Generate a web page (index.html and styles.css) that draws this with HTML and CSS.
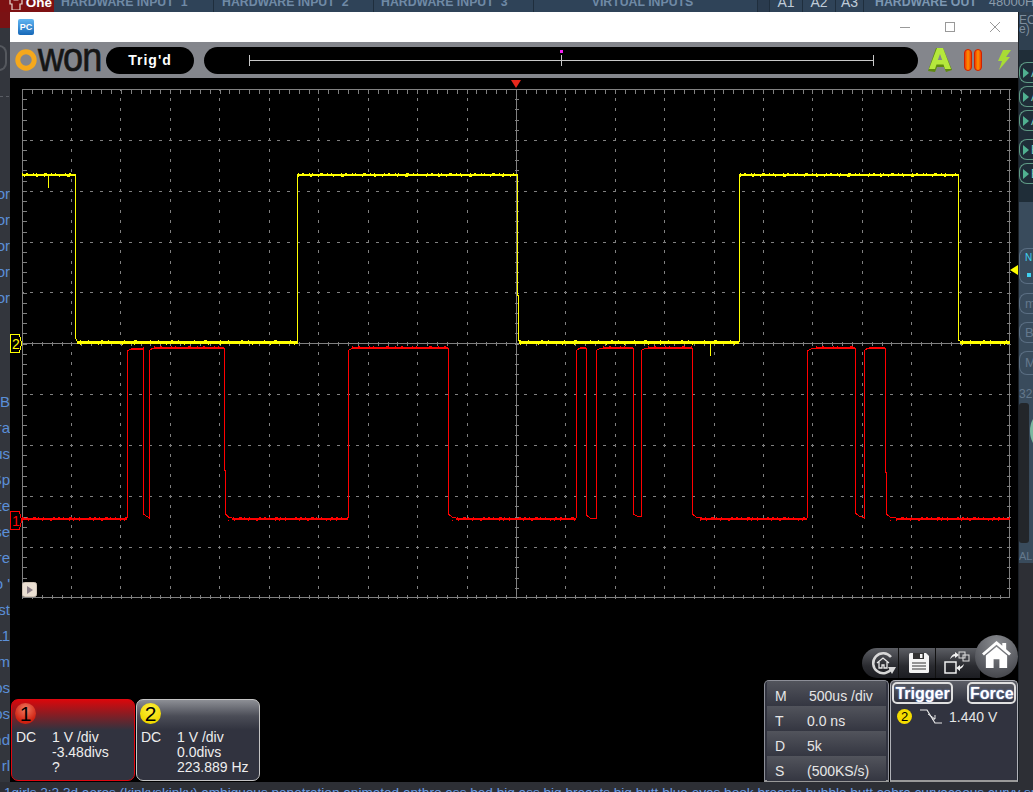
FILE: index.html
```html
<!DOCTYPE html>
<html lang="en">
<head>
<meta charset="utf-8">
<title>OWON oscilloscope</title>
<link rel="stylesheet" href="styles.css">
</head>
<body>
<div class="desktop">
  <header class="mixer-top">
    <div class="brand"><svg class="brand-icon" viewBox="0 0 14 12"><path d="M1 1h3l1 1h4l1-1h3v5h-2v6H3V6H1z" fill="none" stroke="#e8d8d0" stroke-width="1.2"/></svg><b>One</b></div>
    <div class="mix-cell wide"><span>HARDWARE INPUT</span><span class="num">1</span></div>
    <div class="mix-cell wide second"><span>HARDWARE INPUT</span><span class="num">2</span></div>
    <div class="mix-cell wide"><span>HARDWARE INPUT</span><span class="num">3</span></div>
    <div class="mix-cell virtual"><span>VIRTUAL INPUTS</span></div>
    <div class="mix-cell gap"></div>
    <div class="mix-cell bus">A1</div>
    <div class="mix-cell bus">A2</div>
    <div class="mix-cell bus last">A3</div>
    <div class="mix-out"><span>HARDWARE OUT</span><span class="rate">48000Hz</span></div>
  </header>

  <aside class="page-left">
    <div class="left-red"></div>
    <div class="left-ghost"></div>
    <div class="left-rule"></div>
    <div class="left-list">
      <span>or</span><span>or</span><span>or</span><span>or</span><span>or</span>
      <span></span><span></span><span></span>
      <span class="b">B</span><span>ra</span><span>us</span><span>Sp</span><span>te</span><span>se</span><span>ore</span><span>o '</span><span>ust</span><span>11</span><span>m</span><span>ps</span><span>ps</span><span>nd</span><span>rl</span>
    </div>
  </aside>

  <main class="scope">
    <div class="titlebar">
      <div class="pc-icon">PC</div>
      <div class="win-controls">
        <svg viewBox="0 0 10 10"><path d="M0 5.5h10" stroke="#999" fill="none"/></svg>
        <svg viewBox="0 0 10 10"><rect x=".5" y=".5" width="9" height="9" stroke="#999" fill="none"/></svg>
        <svg viewBox="0 0 10 10"><path d="M0 0l10 10M10 0L0 10" stroke="#999" fill="none"/></svg>
      </div>
    </div>

    <div class="toolbar">
      <div class="logo"><svg class="logo-ring" viewBox="0 0 22 22"><circle cx="11" cy="11" r="8.2" fill="none" stroke="#f5a81c" stroke-width="5"/></svg><span class="logo-text">won</span></div>
      <div class="pill status">Trig'd</div>
      <div class="pill timeline">
        <svg viewBox="204 47 714 27"><path d="M249.5 55v11M873.5 55v11M561.5 55v11M249 60.5h625" stroke="#c8c8c8" fill="none"/><rect x="560" y="50" width="3" height="3" fill="#f020f0"/></svg>
      </div>
      <svg class="auto-icon" viewBox="0 0 26 26">
        <path d="M9 1h7l9 22-6 2-2-5H10l-2 5-7-1z" fill="#5f8a10"/>
        <path d="M10 1h6l8 21h-6l-1.500-4.500H9.500L8 22H2z" fill="#b5e83c"/>
        <path d="M13 7l-2.200 6h4.400z" fill="#84868c"/>
      </svg>
      <svg class="pause-icon" viewBox="0 0 18 22">
        <defs><linearGradient id="pz" x1="0" x2="1" y1="0" y2="0"><stop offset="0" stop-color="#f03000"/><stop offset=".5" stop-color="#ff9000"/><stop offset="1" stop-color="#f03000"/></linearGradient></defs>
        <rect x=".5" y=".5" width="7" height="21" rx="3.500" fill="url(#pz)" stroke="#d02000"/>
        <rect x="10.500" y=".5" width="7" height="21" rx="3.500" fill="url(#pz)" stroke="#d02000"/>
      </svg>
      <svg class="bolt-icon" viewBox="0 0 14 20"><path d="M6 0h8L9 7h4L2 20l3-9H1z" fill="#a8dc34"/></svg>
    </div>

    <div class="screen">
      <svg class="graticule" viewBox="10 78 1008 526">
        <rect x="22.500" y="89.500" width="987" height="508" class="g-frame"/>
        <path class="g-v" d="M71.500 89V598M120.500 89V598M170.500 89V598M219.500 89V598M269.500 89V598M318.500 89V598M368.500 89V598M417.500 89V598M467.500 89V598M565.500 89V598M615.500 89V598M664.500 89V598M714.500 89V598M763.500 89V598M812.500 89V598M862.500 89V598M911.500 89V598M960.500 89V598"/>
        <path class="g-h" d="M22 140.500H1010M22 191.500H1010M22 242.500H1010M22 292.500H1010M22 394.500H1010M22 445.500H1010M22 496.500H1010M22 547.500H1010"/>
        <path class="g-tx" d="M22 91.500H1010M22 596.500H1010M22 343.500H1010"/>
        <path class="g-ty" d="M24.500 89V598M1008.500 89V598M516.500 89V598"/>
        <path class="g-axis" d="M22 343.500H1010M516.500 89V598"/>

        <path class="tr-y" d="M75.500 175V338L77 341H79M297.500 342V175M517.500 175V295H518.500V340L521 342M739.500 342V175M958.500 175V340L961 342M48.500 175V188M710.500 343V356"/>
        <path class="tr-y-high" d="M22 175H76M297 175H518M739 175H959"/>
        <path class="tr-y-low" d="M77 342.500H297.500M519 342.500H739M960 342.500H1010"/>
        <path class="n-y1" d="M22 173.500H76M298 173.500H517M740 173.500H958"/>
        <path class="n-y2" d="M24 176.500H76M298 176.500H517M740 176.500H958"/>
        <path class="n-y3" d="M80 340.500H297M520 340.500H738M962 340.500H1010"/>
        <path class="n-y3b" d="M80 344.500H297M520 344.500H738M962 344.500H1010"/>

        <path class="tr-r" d="M127.500 518V350.500L131 349H136L143.500 348V514L146 516L149.500 518V350.500L152 348.500H224.500V470H225.500V514L228 516.500L232 518M348.500 518V350.500L352 348.500H448.500V514L452 517L456 518M576.500 518V350.500L580 348H586.500V515L590 518H596.500V350.500L600 348.500H633.500V514L637 516H641.500V350.500L645 348.500H692.500V514L696 517L700 518M807.500 518V350.500L811 349L815 348H855.500V513L859 516L864.500 518V350.500L868 348H885.500V472H886.500V514L890 517L896 518"/>
        <path class="tr-r-lo" d="M22 519H127M232 519H348M456 519H576M700 519H807M896 519H1010"/>
        <path class="tr-r-hi" d="M131 349H143M154 348H224M352 348H448M580 348H586M603 348H633M648 348H692M816 348H855M869 348H885"/>
        <path class="n-r1" d="M22 517.500H127M228 517.500H348M452 517.500H576M700 517.500H807M890 517.500H1010"/>
        <path class="n-r2" d="M22 520.500H127M228 520.500H348M452 520.500H576M700 520.500H807M890 520.500H1010"/>
        <path class="n-r3" d="M154 346.500H224M352 346.500H448M603 346.500H633M648 346.500H692M816 346.500H855"/>

        <polygon class="trig-top" points="511,80 521,80 516,88"/>
        <polygon class="trig-right" points="1018,265 1018,275 1010,270"/>
        <path class="mk-y" d="M10.500 334.500H19.500L21.500 343.500L19.500 352.500H10.500z"/>
        <text class="mk-text mk-ty" x="12" y="348.500">2</text>
        <path class="mk-r" d="M10.500 511.500H19.500L21.500 520.500L19.500 529.500H10.500z"/>
        <text class="mk-text mk-tr" x="12" y="525.500">1</text>
        <rect class="play-box" x="22.500" y="582.500" width="14" height="14" rx="2"/>
        <polygon class="play-tri" points="27,586 27,594 33,590"/>
      </svg>

      <div class="lower">
        <div class="channels">
          <section class="ch ch1">
            <div class="ch-badge b-red">1</div>
            <div class="ch-grid"><span>DC</span><span>1 V /div</span><span></span><span>-3.48divs</span><span></span><span>?</span></div>
          </section>
          <section class="ch ch2">
            <div class="ch-badge b-yellow">2</div>
            <div class="ch-grid"><span>DC</span><span>1 V /div</span><span></span><span>0.0divs</span><span></span><span>223.889 Hz</span></div>
          </section>
        </div>

        <div class="control">
          <div class="tools">
            <div class="tool-pill">
              <div class="tool"><svg viewBox="0 0 26 26"><path d="M21 7A10 10 0 1 0 22 18" fill="none" stroke="#d8d8d8" stroke-width="2.500"/><path d="M18 17h8l-4 7z" fill="#d8d8d8"/><path d="M7 13l6-5 6 5M9 12v6h3v-3h2v3h3v-6" fill="none" stroke="#e8e8e8" stroke-width="1.300"/></svg></div>
              <div class="tool"><svg viewBox="0 0 20 20"><path d="M0 1.500Q0 0 1.500 0H17l3 3v15.500Q20 20 18.500 20H1.500Q0 20 0 18.500z" fill="#f4f4f4"/><path d="M4 0h11v6H4z" fill="#333"/><rect x="11" y="1" width="2.500" height="4" fill="#f4f4f4"/><path d="M3 10h14M3 13h14M3 16h14" stroke="#333" stroke-width="1.200"/></svg></div>
              <div class="tool"><svg viewBox="0 0 26 24"><rect x="1" y="11" width="11" height="11" fill="none" stroke="#f0f0f0" stroke-width="1.500"/><rect x="15" y="1" width="6" height="6" fill="none" stroke="#e0e0e0"/><rect x="19" y="4" width="6" height="6" fill="none" stroke="#e0e0e0"/><path d="M6 8Q8 3 11 3V1l4 3-4 3V5Q9 5 6 8zM20 13Q19 17 16 18v2l-4-3 4-3v2Q18 15 20 13z" fill="#f0f0f0"/></svg></div>
            </div>
            <div class="home"><svg viewBox="0 0 32 30"><path d="M16 1L1 14l2 2L16 5l13 11 2-2-5-4.500V3h-4v3z" fill="#fff"/><path d="M5 16L16 7l11 9v13h-8v-9h-6v9H5z" fill="#fff"/></svg></div>
          </div>
          <div class="panels">
            <div class="time-panel">
              <div class="trow"><span>M</span><span class="v1">500us /div</span></div>
              <div class="trow"><span>T</span><span>0.0 ns</span></div>
              <div class="trow"><span>D</span><span>5k</span></div>
              <div class="trow"><span>S</span><span>(500KS/s)</span></div>
            </div>
            <div class="trig-panel">
              <div class="trig-btns"><button class="tbtn">Trigger</button><button class="tbtn">Force</button></div>
              <div class="trig-info">
                <span class="mini-badge">2</span>
                <svg class="edge" viewBox="0 0 22 16"><path d="M0 1H7L15 14H22" fill="none" stroke="#e8e8e8" stroke-width="1.200"/><path d="M8 5L15 10M12 10H15V6" fill="none" stroke="#e8e8e8"/></svg>
                <span>1.440 V</span>
              </div>
            </div>
          </div>
        </div>
      </div>
    </div>
  </main>

  <aside class="page-right">
    <div class="r-head"><span>EC X</span><span>e)</span></div>
    <div class="r-dark">
      <div class="r-btn"><i></i><span>A</span></div>
      <div class="r-btn"><i></i><span>A</span></div>
      <div class="r-btn"><i></i><span>A</span></div>
      <div class="r-btn sep"><i></i><span>B</span></div>
      <div class="r-btn"><i></i><span>B</span></div>
    </div>
    <div class="r-mid">
      <div class="r-box cyan"><span>N</span><span class="m">m</span><span class="dots"></span></div>
      <div class="r-box plain">m</div>
      <div class="r-box plain">B</div>
      <div class="r-box plain tall">M</div>
      <div class="r-num">32</div>
      <div class="r-meter"><div class="r-knob"></div></div>
      <div class="r-al">AL</div>
    </div>
    <div class="r-end"></div>
  </aside>

  <footer class="page-foot">1girls 2:2 3d aeros (kinkyskinky) ambiguous penetration animated anthro ass bed big ass big breasts big butt blue eyes book breasts bubble butt cobra curvaceous curvy super</footer>
</div>
</body>
</html>
```

FILE: styles.css
```css
* { box-sizing: border-box; }
html, body { margin: 0; padding: 0; }
body { background: #2d2f35; font-family: "Liberation Sans", Arial, sans-serif; overflow: hidden; }

.desktop {
  width: 1033px;
  height: 792px;
  display: grid;
  grid-template-columns: 10px 1008px 15px;
  grid-template-rows: 12px 770px 10px;
  overflow: hidden;
}

/* mixer behind the scope window */
.mixer-top {
  grid-column: 1 / 4;
  display: flex;
  background: #2f4358;
  overflow: hidden;
  height: 12px;
}
.brand { width: 54px; flex: none; background: #7d1012; color: #fff; display: flex; justify-content: flex-end; padding-right: 2px; gap: 3px; }
.brand-icon { width: 14px; height: 12px; margin-top: -2px; }
.brand b { font-size: 13.500px; line-height: 12px; margin-top: -3px; }
.mix-cell { flex: none; color: #6f8aa6; font-weight: bold; font-size: 12.300px; line-height: 12px; border-right: 1px solid #1f2e3d; display: flex; white-space: nowrap; }
.mix-cell span { margin-top: -4px; display: block; }
.wide { width: 160px; padding-left: 7px; }
.second { width: 160px; padding-left: 8px; }
.num { margin-left: 7px; }
.virtual { width: 224px; justify-content: center; padding-right: 6px; }
.gap { width: 12px; background: #2a3b4e; }
.bus { width: 33px; justify-content: center; color: #c0ccd8; font-weight: normal; font-size: 14px; line-height: 4px; }
.last { width: 28px; }
.mix-out { flex: 1; min-width: 0; padding-left: 11px; display: flex; color: #7c97b2; font-weight: bold; font-size: 12.300px; line-height: 12px; gap: 12px; white-space: nowrap; overflow: hidden; }
.mix-out span { margin-top: -4px; }
.rate { font-weight: normal; font-size: 13px; color: #8a9bab; }

.page-left { background: #33363d; overflow: hidden; }
.left-red { height: 16px; background: #7a1214; }
.left-ghost { height: 26px; width: 8px; margin: 17px 0 0 -1px; border: 2px solid #55585e; border-left: none; border-radius: 0 8px 8px 0; }
.left-rule { width: 9px; height: 1px; margin-top: 25px; border-top: 1px dashed #5a5d64; }
.left-list { display: grid; grid-auto-rows: 26px; padding-top: 84px; }
.left-list span { display: flex; justify-content: flex-end; color: #5b8fd8; font-size: 15px; line-height: 26px; white-space: nowrap; overflow: hidden; width: 10px; }

/* scope window */
.scope { display: flex; flex-direction: column; background: #000; min-width: 0; }
.titlebar { height: 30px; background: #fff; display: flex; align-items: center; justify-content: space-between; padding-left: 8px; flex: none; }
.pc-icon {
  width: 16px; height: 16px; border-radius: 2px;
  background: linear-gradient(#62b6f2, #1668b8);
  color: #fff; font: bold 9px/16px "Liberation Sans", sans-serif; text-align: center;
}
.win-controls { display: flex; gap: 35px; padding-right: 18px; }
.win-controls svg { width: 10px; height: 10px; display: block; }

.toolbar { height: 36px; background: #84868c; display: flex; align-items: center; flex: none; position: relative; padding-left: 5px; }
.logo { width: 91px; display: flex; align-items: center; height: 36px; flex: none; }
.logo-ring { width: 22px; height: 22px; flex: none; }
.logo-text { font-size: 40px; line-height: 36px; color: #151515; letter-spacing: -1px; margin-top: -7px; margin-left: 1px; -webkit-text-stroke: .7px #151515; transform-origin: left center; transform: scaleX(.9); display: block; }
.pill { background: #000; height: 27px; border-radius: 14px; }
.status { width: 88px; color: #fff; font: bold 14px/27px "Liberation Sans", sans-serif; letter-spacing: 1px; text-align: center; }
.timeline { width: 714px; margin-left: 10px; }
.timeline svg { width: 714px; height: 27px; display: block; }
.auto-icon { width: 26px; height: 26px; margin-left: 9px; }
.pause-icon { width: 18px; height: 22px; margin-left: 11px; }
.bolt-icon { width: 14px; height: 20px; margin-left: 15px; }

.screen { flex: 1; display: flex; flex-direction: column; background: #000; min-height: 0; }
.graticule { width: 1008px; height: 526px; display: block; flex: none; }
.g-frame { fill: none; stroke: #808080; }
.g-v { fill: none; stroke: #808080; stroke-dasharray: 3 7.180; stroke-dashoffset: 1.500; }
.g-h { fill: none; stroke: #808080; stroke-dasharray: 3 6.880; stroke-dashoffset: 1.500; }
.g-tx { fill: none; stroke: #808080; stroke-width: 4; stroke-dasharray: 1 8.880; }
.g-ty { fill: none; stroke: #808080; stroke-width: 4; stroke-dasharray: 1 9.180; }
.g-axis { fill: none; stroke: #808080; }
.graticule path, .graticule rect.g-frame { shape-rendering: crispEdges; }

.tr-y { fill: none; stroke: #ffff00; }
.tr-y-high { fill: none; stroke: #ffff00; stroke-width: 2; }
.tr-y-low { fill: none; stroke: #ffff00; stroke-width: 3; }
.n-y1 { fill: none; stroke: #ffff00; stroke-dasharray: 1 3 2 5 1 2 1 7 3 4 1 3 1 9; }
.n-y2 { fill: none; stroke: #ffff00; stroke-dasharray: 1 11 2 6 1 14 1 7 3 18; }
.n-y3 { fill: none; stroke: #ffff00; stroke-dasharray: 1 7 1 12 2 5 1 15 1 9 3 13; }
.n-y3b { fill: none; stroke: #ffff00; stroke-dasharray: 1 17 1 23 1 11 1 31; }
.tr-r { fill: none; stroke: #ff0000; }
.tr-r-lo { fill: none; stroke: #ff0000; stroke-width: 2; }
.tr-r-hi { fill: none; stroke: #ff0000; stroke-width: 2; }
.n-r1 { fill: none; stroke: #ff0000; stroke-dasharray: 2 3 1 5 3 2 1 4 1 9 2 3; }
.n-r2 { fill: none; stroke: #ff0000; stroke-dasharray: 1 5 1 13 1 7 2 17 1 3; }
.n-r3 { fill: none; stroke: #ff0000; stroke-dasharray: 1 5 2 9 1 3 1 12 3 6; }
.trig-top { fill: #e8281c; }
.trig-right { fill: #ffff00; }
.mk-y { fill: #000; stroke: #ffff00; }
.mk-r { fill: #000; stroke: #ff0000; }
.mk-text { font: 14px "Liberation Sans", sans-serif; }
.mk-ty { fill: #ffff00; }
.mk-tr { fill: #ff0000; }
.play-box { fill: #eadfd2; stroke: #cfc2b4; }
.play-tri { fill: #8c8088; }

.lower { flex: 1; display: flex; justify-content: space-between; align-items: flex-end; min-height: 0; }
.channels { display: flex; gap: 1px; padding: 0 0 1px 1px; }
.ch { width: 124px; height: 82px; border-radius: 7px; color: #eee; font-size: 14px; position: relative; padding: 30px 4px 0; }
.ch1 { border: 1px solid #e00810; background: linear-gradient(#d8080c 0, #8a1c22 14px, #31333f 30px); }
.ch2 { border: 1px solid #c4c4c4; background: linear-gradient(#8d8f95 0, #4b4d57 16px, #31333f 30px); }
.ch-badge { position: absolute; left: 3px; top: 3px; width: 21px; height: 21px; border-radius: 50%; color: #000; font: 21px/21px "Liberation Sans", sans-serif; text-align: center; }
.b-red { background: radial-gradient(circle at 50% 30%, #f07a60, #d02010 70%); }
.b-yellow { background: radial-gradient(circle at 50% 30%, #fff040, #f0d800 70%); }
.ch-grid { display: grid; grid-template-columns: 36px 1fr; grid-auto-rows: 15px; line-height: 15px; }

.control { width: 254px; display: flex; flex-direction: column; align-items: stretch; flex: none; }
.tools { display: flex; justify-content: flex-end; align-items: flex-end; height: 43px; margin-bottom: 2px; }
.tool-pill { width: 118px; height: 30px; display: flex; border-radius: 15px 0 0 15px; background: linear-gradient(#5c5e64, #2a2b30 60%, #1c1d22); }
.tool { display: flex; align-items: center; justify-content: center; border-right: 1px solid #111; height: 30px; }
.tool:nth-child(1) { width: 37px; }
.tool:nth-child(1) svg { width: 26px; height: 26px; margin-left: 5px; }
.tool:nth-child(2) { width: 37px; padding-left: 3px; }
.tool:nth-child(2) svg { width: 20px; height: 20px; }
.tool:nth-child(3) { width: 44px; border-right: none; justify-content: flex-start; padding-left: 8px; }
.tool:nth-child(3) svg { width: 26px; height: 24px; }
.home { width: 43px; height: 43px; border-radius: 50%; background: radial-gradient(circle at 50% 20%, #8a8c90, #5a5c62 60%, #3a3b40); margin-left: -5px; flex: none; display: flex; align-items: center; justify-content: center; position: relative; padding-bottom: 4px; }
.home svg { width: 31px; height: 29px; }

.panels { display: flex; height: 102px; }
.time-panel { width: 125px; border: 1px solid #8d8f98; border-bottom: 2px solid #999; background: #31333f; border-radius: 5px 5px 0 0; padding: 0 2px; }
.trow { height: 25px; display: grid; grid-template-columns: 32px 1fr; align-items: center; padding: 4px 0 0 8px; color: #e6e6e6; font-size: 14px; background: linear-gradient(#52545c, #343641); }
.v1 { padding-left: 2px; }
.trig-panel { flex: 1; margin-left: 1px; border: 1px solid #b0b2b8; border-bottom: 2px solid #999; background: linear-gradient(#5c5e66, #31333f 20px); border-radius: 5px 5px 0 0; color: #e6e6e6; font-size: 14px; }
.trig-btns { display: flex; justify-content: space-between; padding: 1px 1px 0 1px; }
.tbtn { height: 22px; padding: 0 1px; background: transparent; border: 2px solid #e0e0e0; border-radius: 5px; color: #fff; font: bold 16px/17px "Liberation Sans", sans-serif; text-shadow: 0 0 2px #8fb0ff; }
.tbtn:first-child { width: 61px; }
.tbtn:last-child { width: 49px; }
.trig-info { display: flex; align-items: center; padding: 1px 0 0 6px; height: 24px; }
.mini-badge { width: 15px; height: 15px; border-radius: 50%; background: #f4dc00; color: #000; font-size: 13px; line-height: 15px; text-align: center; flex: none; }
.edge { width: 22px; height: 16px; margin: 0 7px 0 8px; flex: none; }

/* page to the right of the scope */
.page-right { background: #2d2f35; display: flex; flex-direction: column; overflow: hidden; border-left: 1px solid #1b2026; }
.r-head { height: 38px; background: #2f4050; color: #7e8e9e; font-size: 12px; line-height: 9px; padding-top: 4px; display: flex; flex-direction: column; white-space: nowrap; }
.r-dark { height: 152px; background: #1f2d38; padding-top: 12px; display: flex; flex-direction: column; gap: 3px; }
.r-btn { height: 21px; width: 24px; flex: none; border: 1px solid #5f9a85; border-right: none; border-radius: 8px 0 0 8px; display: flex; align-items: center; padding-left: 3px; gap: 2px; font-size: 12px; color: #7fd0c0; }
.r-btn i { width: 0; height: 0; border-left: 6px solid #50b090; border-top: 5px solid transparent; border-bottom: 5px solid transparent; }
.sep { margin-top: 5px; }
.r-mid { height: 361px; background: #394b5c; padding-top: 46px; display: flex; flex-direction: column; color: #64788c; }
.r-box { width: 24px; border: 1px solid #5a6e82; border-right: none; border-radius: 8px 0 0 8px; padding-left: 5px; font-size: 13px; margin-bottom: 8px; height: 21px; line-height: 19px; overflow: hidden; flex: none; }
.cyan { height: 36px; font-size: 10px; color: #40d0f0; display: flex; flex-direction: column; line-height: 9px; padding-top: 4px; margin-bottom: 9px; }
.cyan .m { padding-left: 8px; }
.dots { width: 4px; height: 4px; background: #40d0f0; margin: 2px 0 0 2px; }
.tall { height: 24px; line-height: 22px; margin-bottom: 0; }
.r-num { font-size: 12px; line-height: 14px; margin-top: 12px; }
.r-meter { width: 10px; height: 140px; margin-top: 2px; background: #23262a; border-radius: 3px; position: relative; flex: none; }
.r-knob { position: absolute; left: 11px; top: 10px; width: 24px; height: 36px; border-radius: 50%; background: #7cb8a0; }
.r-al { font-size: 11px; line-height: 14px; margin-top: 6px; }
.r-end { flex: 1; background: #2d2f35; }

.page-foot { grid-column: 1 / 4; background: #2d2f35; color: #6a9ee8; font-size: 13.600px; line-height: 16px; padding: 3px 0 0 4px; white-space: nowrap; overflow: hidden; }
```
